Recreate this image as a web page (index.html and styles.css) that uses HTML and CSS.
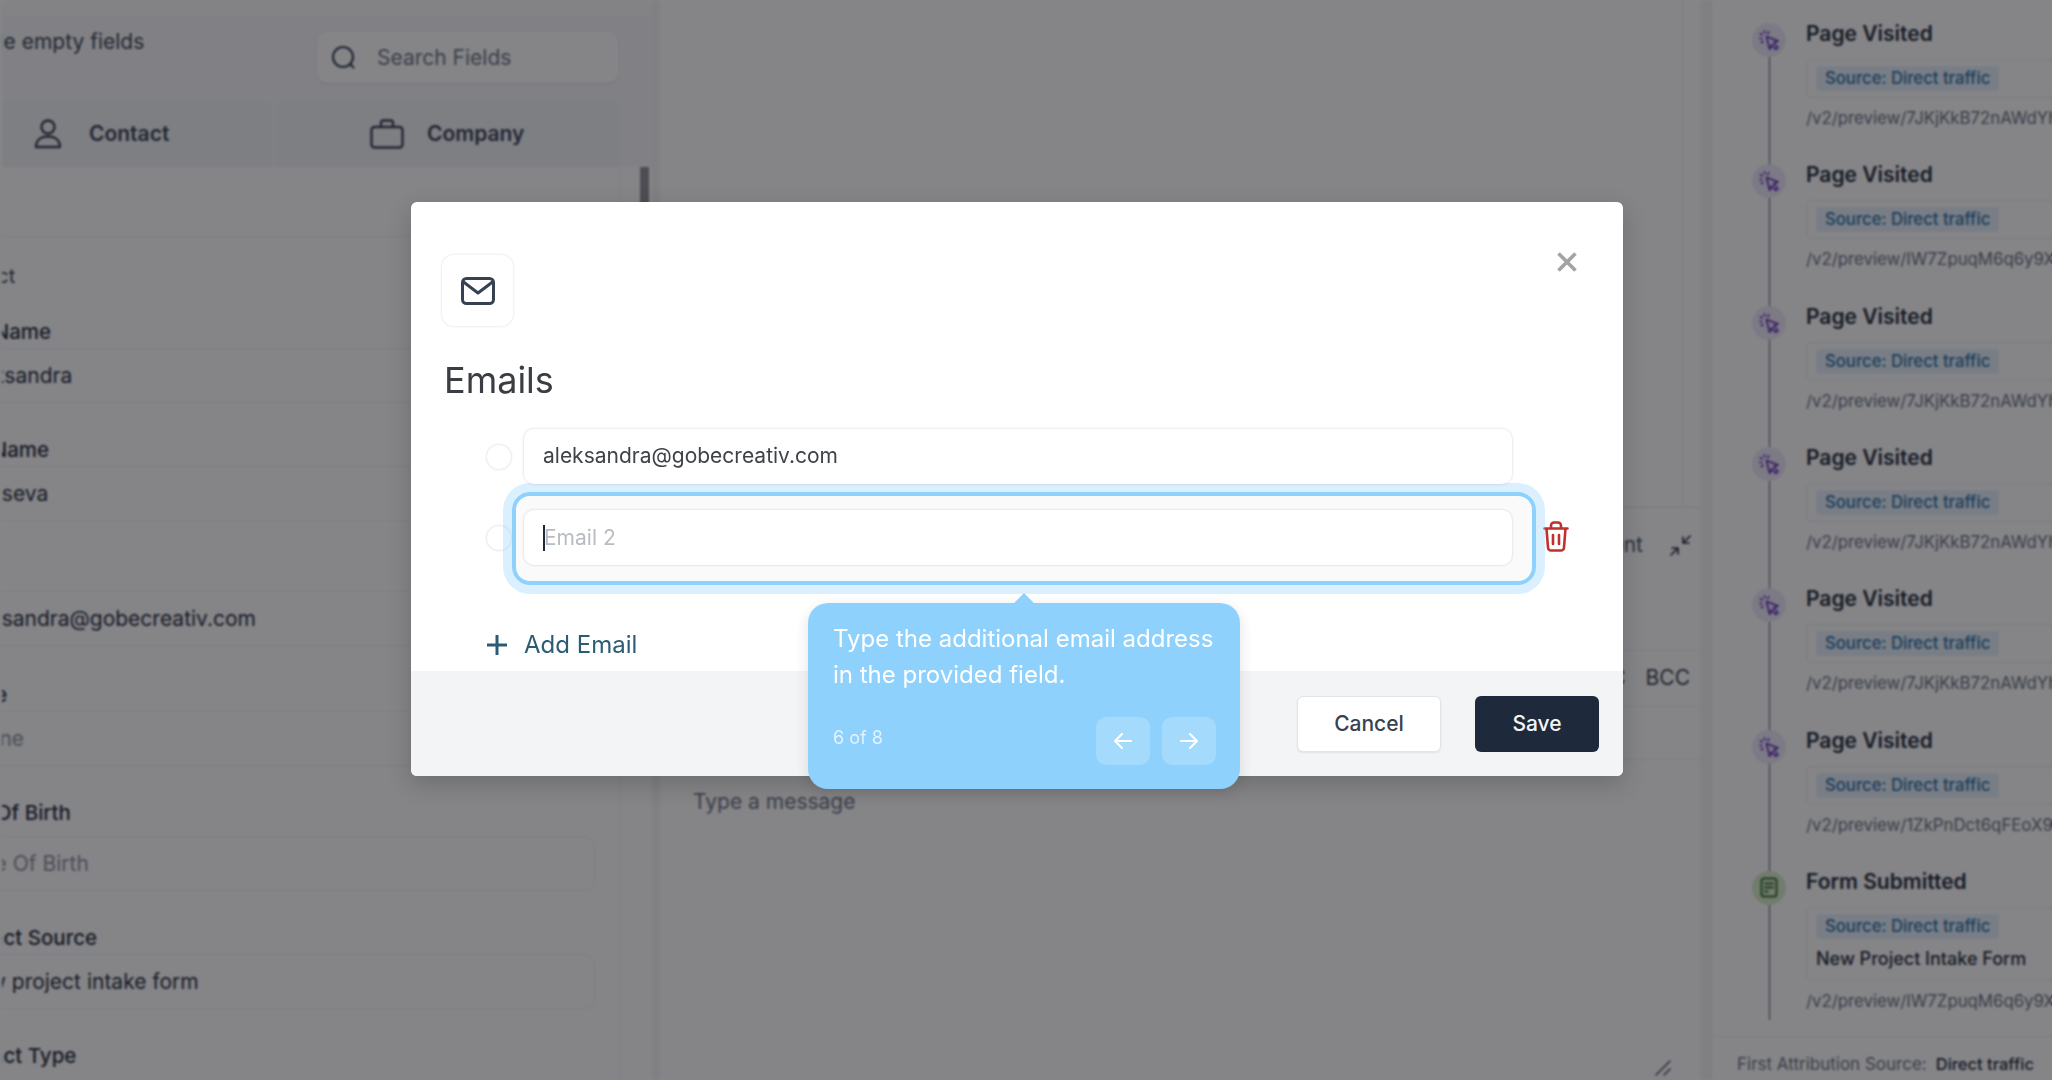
FILE: index.html
```html
<!DOCTYPE html>
<html lang="en">
<head>
    <meta charset="UTF-8">
    <meta name="viewport" content="width=device-width, initial-scale=1.0">
    <title>Emails</title>
    <link rel="stylesheet" href="styles.css">
</head>
<body>
    <div class="app">
        <!-- Contact fields -->
        <aside class="contact-panel">
            <div class="toolbar">
                <span class="toolbar-label">Hide empty fields</span>
                <div class="search-box">
                    <svg width="26" height="26" viewBox="0 0 26 26" fill="none" stroke="#374151" stroke-width="2.2" stroke-linecap="round"><circle cx="12" cy="12" r="10"/><path d="M19.5 19.5l3 3"/></svg>
                    <span>Search Fields</span>
                </div>
            </div>
            <div class="tabs">
                <div class="tab tab-contact">
                    <svg width="28" height="30" viewBox="0 0 28 30" fill="none" stroke="#374151" stroke-width="2.4"><circle cx="14" cy="8" r="6.5"/><path d="M2 28c0-7 5-10.500 12-10.500S26 21 26 28z" stroke-linejoin="round"/></svg>
                    <span>Contact</span>
                </div>
                <div class="tab tab-company">
                    <svg width="34" height="30" viewBox="0 0 34 30" fill="none" stroke="#374151" stroke-width="2.400"><rect x="1.500" y="8" width="31" height="20.500" rx="3"/><path d="M11 8V4a2.500 2.500 0 0 1 2.500-2.500h7A2.500 2.500 0 0 1 23 4v4"/></svg>
                    <span>Company</span>
                </div>
            </div>
            <div class="panel-body">
                <div class="fields-col">
                    <div class="section-gap"></div>
                    <div class="fields">
                        <div class="section-title">Contact</div>
                        <div class="field field-first"><label>First Name</label><div class="field-input">Aleksandra</div></div>
                        <div class="field"><label>Last Name</label><div class="field-input">Kartseva</div></div>
                        <div class="field field-wide"><label>Email</label><div class="field-input">aleksandra@gobecreativ.com</div></div>
                        <div class="field field-mid"><label>Phone</label><div class="field-input placeholder">Phone</div></div>
                        <div class="field field-date"><label>Date Of Birth</label><div class="field-input placeholder">Date Of Birth</div></div>
                        <div class="field field-source"><label>Contact Source</label><div class="field-input">New project intake form</div></div>
                        <div class="field"><label>Contact Type</label></div>
                    </div>
                </div>
                <div class="scroll-thumb"></div>
            </div>
        </aside>

        <!-- Conversation -->
        <main class="conversation">
            <div class="thread"></div>
            <div class="composer">
                <div class="composer-head">
                    <span>Comment</span>
                    <svg width="21" height="21" viewBox="0 0 21 21" fill="none" stroke="#1f2937" stroke-width="1.600" stroke-linecap="round" stroke-linejoin="round"><path d="M20 1l-7 7M13 2v6h6M1 20l7-7M2 13h6v6"/></svg>
                </div>
                <div class="composer-row composer-to"><span>CC</span><span>BCC</span></div>
                <div class="composer-row composer-subject"></div>
                <div class="composer-body">
                    <span class="composer-hint">Type a message</span>
                    <svg class="resize-handle" width="16" height="16" viewBox="0 0 16 16" fill="none" stroke="#374151" stroke-width="1.400" stroke-linecap="round"><path d="M1 15L15 1M9 15l6-6"/></svg>
                </div>
            </div>
        </main>

        <!-- Activity timeline -->
        <aside class="activity">
            <div class="timeline" id="timeline"></div>
            <div class="attribution">
                <span>First Attribution Source:</span>
                <strong>Direct traffic</strong>
            </div>
        </aside>
    </div>

    <!-- Emails dialog -->
    <div class="overlay">
        <div class="modal">
            <div class="modal-body">
                <svg class="close-icon" width="20" height="20" viewBox="0 0 20 20" fill="none" stroke="#a3a3a3" stroke-width="3.600"><path d="M1.500 1.500l17 17M18.500 1.500l-17 17"/></svg>
                <div class="modal-icon">
                    <svg width="34" height="28" viewBox="0 0 34 28" fill="none" stroke="#374151" stroke-width="3" stroke-linejoin="round"><rect x="1.500" y="1.500" width="31" height="25" rx="4"/><path d="M2.500 5L17 16 31.500 5"/></svg>
                </div>
                <h2>Emails</h2>
                <div class="email-row">
                    <span class="radio"></span>
                    <div class="email-input">aleksandra@gobecreativ.com</div>
                </div>
                <div class="email-row email-row-second">
                    <span class="radio"></span>
                    <div class="email-input email-empty"><i class="caret"></i>Email 2</div>
                    <svg class="trash-icon" width="26" height="31" viewBox="0 0 26 31" fill="none" stroke="#c0302c" stroke-width="2.600" stroke-linecap="round" stroke-linejoin="round"><path d="M8 7V4.500A3 3 0 0 1 11 1.500h4a3 3 0 0 1 3 3V7M1.500 7.500h23M3.500 7.500l1.500 19a3 3 0 0 0 3 3h10a3 3 0 0 0 3-3l1.500-19M10 14v9M16 14v9"/></svg>
                </div>
                <div class="add-email">
                    <svg width="20" height="20" viewBox="0 0 20 20" fill="none" stroke="#2c5b75" stroke-width="3"><path d="M10 0v20M0 10h20"/></svg>
                    <span>Add Email</span>
                </div>
                <div class="step-highlight"></div>
            </div>
            <div class="modal-footer">
                <button class="btn btn-cancel">Cancel</button>
                <button class="btn btn-save">Save</button>
            </div>

            <div class="tour-tip">
                <p>Type the additional email address in the provided field.</p>
                <div class="tour-footer">
                    <span class="tour-count">6 of 8</span>
                    <div class="tour-buttons">
                        <button class="tour-btn"><svg width="20" height="18" viewBox="0 0 20 18" fill="none" stroke="#fff" stroke-width="2.200" stroke-linecap="round" stroke-linejoin="round"><path d="M18 9H2M9 2L2 9l7 7"/></svg></button>
                        <button class="tour-btn"><svg width="20" height="18" viewBox="0 0 20 18" fill="none" stroke="#fff" stroke-width="2.200" stroke-linecap="round" stroke-linejoin="round"><path d="M2 9h16M11 2l7 7-7 7"/></svg></button>
                    </div>
                </div>
            </div>
        </div>
    </div>

    <script>
        // Timeline rows
        const visits = [
            '7JKjKkB72nAWdYhQ', 'IW7ZpuqM6q6y9XaB', '7JKjKkB72nAWdYhQ',
            '7JKjKkB72nAWdYhQ', '7JKjKkB72nAWdYhQ', '1ZkPnDct6qFEoX9a'
        ];
        const cursorIcon = '<svg width="20" height="20" viewBox="0 0 20 20" fill="none" stroke="#5b21b6" stroke-width="1.600" stroke-linecap="round" stroke-linejoin="round"><path d="M7.500 6.500L19 11l-4.500 2 4.500 4.500-2.200 2L12.500 15l-1.800 4.500z"/><path d="M5.500 1v2M1.500 3.700L3 5M1 8.500h1.800M2.500 12.500l1.300-1M9.700 2l-1 1.500"/></svg>';
        const formIcon = '<svg width="18" height="21" viewBox="0 0 18 21" fill="none" stroke="#2f6a2e" stroke-width="2" stroke-linecap="round"><rect x="1.500" y="1.500" width="15" height="18" rx="2.500"/><path d="M5 6.500h8M5 10.500h8M5 14.500h2.500"/></svg>';
        const timeline = document.getElementById('timeline');

        function addItem(title, icon, iconClass, extra, path) {
            timeline.insertAdjacentHTML('beforeend', `
                <div class="event">
                    <div class="rail"><span class="event-icon ${iconClass}">${icon}</span><span class="rail-line"></span></div>
                    <div class="event-main">
                        <div class="event-title">${title}</div>
                        <div class="event-box"><span class="source-badge">Source: Direct traffic</span>${extra}</div>
                        <div class="event-path">/v2/preview/${path}</div>
                    </div>
                </div>`);
        }

        visits.forEach(function (id) {
            addItem('Page Visited', cursorIcon, 'icon-visit', '', id);
        });
        addItem('Form Submitted', formIcon, 'icon-form', '<div class="form-name">New Project Intake Form</div>', 'IW7ZpuqM6q6y9XaB');
    </script>
</body>
</html>
```
FILE: styles.css
```css
* {
    box-sizing: border-box;
}

body {
    margin: 0;
    height: 1080px;
    overflow: hidden;
    background: #fff;
    font-family: Inter, "Noto Sans", sans-serif;
    color: #1f2937;
}

.app {
    position: relative;
    display: grid;
    grid-template-columns: 650px 1058px 342px;
    height: 1078px;
    margin: 1px 0 1px 2px;
    border-radius: 12px;
    overflow: hidden;
    background: #fff;
}

/* Left panel */
.contact-panel {
    overflow: hidden;
    background: #fff;
}

.toolbar {
    display: flex;
    justify-content: space-between;
    align-items: flex-start;
    height: 99px;
    padding: 17px 34px 0 0;
    border-top: 14px solid #fafafa;
    background: #f6f7f9;
}

.toolbar-label {
    margin: -2px 0 0 -32px;
    font-size: 21px;
    line-height: 24px;
    color: #374151;
    white-space: nowrap;
}

.search-box {
    display: flex;
    align-items: center;
    gap: 20px;
    width: 301px;
    height: 51px;
    padding-left: 14px;
    border-radius: 10px;
    background: #fff;
    box-shadow: 0 1px 3px rgba(0, 0, 0, 0.1);
    font-size: 21px;
    color: #6b7280;
}

.tabs {
    display: grid;
    grid-template-columns: 270px 345px;
    gap: 3px;
    height: 67px;
    background: #f6f7f9;
}

.tab {
    display: flex;
    align-items: center;
    gap: 27px;
    border-radius: 8px 8px 0 0;
    background: #f1f2f5;
    font-size: 21px;
    font-weight: 600;
    color: #374151;
}

.tab-contact {
    padding-left: 32px;
}

.tab-company {
    padding-left: 95px;
    gap: 23px;
}

.panel-body {
    display: flex;
    height: 911px;
}

.fields-col {
    flex: 0 0 618px;
    overflow: hidden;
    border-right: 1px solid #f1f1f3;
}

.section-gap {
    height: 70px;
    margin-right: -1px;
    border-bottom: 1px solid #eceef1;
    background: #fff;
}

.fields {
    width: 650px;
    margin-left: -57px;
}

.section-title {
    margin: 27px 0 0 -4px;
    font-size: 20px;
    line-height: 24px;
    color: #374151;
}

.field {
    margin-top: 35px;
}

.field-first {
    margin-top: 32px;
}

.field-wide {
    margin-top: 42px;
}

.field-mid {
    margin-top: 37px;
}

.field label {
    display: block;
    height: 24px;
    font-size: 20.500px;
    font-weight: 500;
    line-height: 24px;
    color: #1f2937;
}

.field-input {
    height: 55px;
    margin-top: 4px;
    padding-left: 15px;
    border: 1px solid #eceef1;
    border-radius: 10px;
    background: #fff;
    font-size: 21px;
    line-height: 53px;
    color: #1f2937;
    white-space: nowrap;
}

.field-date .field-input {
    margin-top: 11px;
}

.placeholder {
    color: #8b8f98;
}

.scroll-thumb {
    flex: 0 0 9px;
    height: 45px;
    margin-left: 20px;
    background: #8f9095;
}

/* Middle panel */
.conversation {
    display: flex;
    flex-direction: column;
    background: linear-gradient(90deg, #f4f4f5 8px, #fff 8px, #fff 1048px, #f4f4f5 1048px);
}

.thread {
    flex: 0 0 506px;
    width: 1031px;
    border-right: 1px solid #eceef1;
}

.composer {
    flex: 1;
    display: flex;
    flex-direction: column;
    width: 1048px;
    border-top: 1px solid #e5e7eb;
}

.composer-head {
    display: flex;
    justify-content: flex-end;
    align-items: flex-start;
    gap: 27px;
    height: 142px;
    padding: 25px 9px 0 0;
    font-size: 21px;
    line-height: 24px;
    color: #4b5563;
}

.composer-head svg {
    margin-top: 2px;
}

.composer-row {
    display: flex;
    justify-content: flex-end;
    gap: 20px;
    margin-right: 3px;
    border-top: 1px solid #eceef1;
    font-size: 21px;
    color: #374151;
}

.composer-to {
    height: 56px;
    padding: 14px 7px 0 0;
    line-height: 26px;
}

.composer-subject {
    height: 53px;
}

.composer-body {
    flex: 1;
    display: flex;
    flex-direction: column;
    border-top: 1px solid #eceef1;
    padding: 29px 0 3px 41px;
}

.composer-hint {
    font-size: 21px;
    line-height: 26px;
    color: #6b7280;
}

.resize-handle {
    align-self: flex-end;
    margin: auto 29px 0 0;
}

/* Right panel */
.activity {
    display: flex;
    flex-direction: column;
    overflow: hidden;
    border-left: 2px solid #f0f0f2;
    background: #fff;
}

.timeline {
    flex: 1;
    padding: 20px 0 0 40px;
}

.event {
    display: flex;
    gap: 20px;
    height: 141.330px;
}

.rail {
    display: flex;
    flex-direction: column;
    align-items: center;
    flex: 0 0 34px;
    margin-top: 2px;
}

.event-icon {
    display: flex;
    justify-content: center;
    align-items: center;
    flex: 0 0 34px;
    width: 34px;
    border-radius: 50%;
}

.icon-visit {
    background: #ece8f8;
}

.icon-form {
    background: #d8ecc8;
}

.rail-line {
    flex: 1;
    width: 1px;
    margin-bottom: -2px;
    background: #4b5563;
}

.event:last-child .rail-line {
    flex: 0 0 115px;
    margin-bottom: 0;
}

.event-main {
    flex: 1;
    min-width: 0;
}

.event-title {
    font-size: 21px;
    font-weight: 600;
    line-height: 26px;
    color: #1f2937;
    white-space: nowrap;
}

.event-box {
    width: 300px;
    min-height: 39px;
    margin-top: 12px;
    padding: 6px 9px;
    border: 1px solid #e8e9ec;
    border-radius: 6px;
    background: #fff;
}

.source-badge {
    display: block;
    width: fit-content;
    height: 25px;
    padding: 0 9px;
    border-radius: 3px;
    background: #e6f1fa;
    font-size: 16.700px;
    font-weight: 500;
    line-height: 25px;
    color: #2a6da3;
    white-space: nowrap;
}

.form-name {
    margin: 7px 0 2px;
    font-size: 18px;
    font-weight: 500;
    line-height: 26px;
    color: #1f2937;
    white-space: nowrap;
}

.event-path {
    margin-top: 9px;
    font-size: 16.800px;
    line-height: 22px;
    color: #6b7280;
    white-space: nowrap;
}

.attribution {
    display: flex;
    gap: 9px;
    flex: 0 0 43px;
    padding: 15px 0 0 25px;
    border-top: 1px solid #eceef1;
    font-size: 17px;
    line-height: 24px;
    color: #6b7280;
    white-space: nowrap;
}

.attribution strong {
    font-size: 16.500px;
    font-weight: 500;
    color: #1f2937;
}

/* Dialog */
.overlay {
    position: fixed;
    inset: 0;
    padding: 202px 0 0 411px;
    background: rgba(11, 12, 18, 0.5);
    backdrop-filter: blur(1px);
}

.modal {
    position: relative;
    width: 1212px;
    height: 574px;
    border-radius: 6px;
    background: #fff;
    box-shadow: 0 8px 24px rgba(0, 0, 0, 0.18);
}

.modal-body {
    position: relative;
    height: 469px;
    padding: 53px 0 0 31px;
}

.close-icon {
    position: absolute;
    top: 50px;
    right: 46px;
}

.modal-icon {
    display: flex;
    justify-content: center;
    align-items: center;
    width: 71px;
    height: 71px;
    border-radius: 12px;
    box-shadow: 0 0 3px rgba(0, 0, 0, 0.14);
}

.modal h2 {
    margin: 32px 0 0 2px;
    font-size: 36px;
    font-weight: 400;
    line-height: 44px;
    color: #3a3d42;
}

.email-row {
    display: flex;
    align-items: center;
    gap: 13px;
    margin: 27px 0 0 45px;
}

.email-row-second {
    margin-top: 26px;
}

.radio {
    flex: 0 0 24px;
    height: 24px;
    border-radius: 50%;
    background: #fff;
    box-shadow: 0 0 3px rgba(0, 0, 0, 0.2);
}

.email-input {
    position: relative;
    z-index: 2;
    flex: 0 0 988px;
    height: 55px;
    padding-left: 19px;
    border-radius: 10px;
    background: #fff;
    box-shadow: 0 0 3px rgba(0, 0, 0, 0.18);
    font-size: 21px;
    line-height: 53px;
    color: #3f4349;
}

.email-empty {
    display: flex;
    align-items: center;
    line-height: normal;
    color: #b8bcc2;
}

.caret {
    width: 2px;
    height: 26px;
    margin-right: -1px;
    background: #1f2937;
}

.trash-icon {
    position: relative;
    top: -1px;
    flex: 0 0 26px;
    margin-left: 18px;
}

.add-email {
    display: flex;
    align-items: center;
    gap: 17px;
    margin: 69px 0 0 45px;
    height: 21px;
    font-size: 24px;
    color: #2c5b75;
}

.step-highlight {
    position: absolute;
    z-index: 1;
    top: 290px;
    left: 101px;
    width: 1024px;
    height: 93px;
    border: 4px solid #8ed1fc;
    border-radius: 18px;
    background: rgba(0, 0, 0, 0.02);
    box-shadow: 0 0 0 9px rgba(142, 209, 252, 0.32);
    pointer-events: none;
}

.modal-footer {
    display: flex;
    justify-content: flex-end;
    align-items: center;
    gap: 34px;
    height: 105px;
    padding-right: 24px;
    border-radius: 0 0 6px 6px;
    background: #f3f4f6;
}

.btn {
    height: 56px;
    border-radius: 6px;
    font-family: inherit;
    font-size: 21px;
    font-weight: 500;
}

.btn-cancel {
    width: 144px;
    border: 1px solid #e2e4e8;
    background: #fff;
    box-shadow: 0 1px 2px rgba(0, 0, 0, 0.08);
    color: #374151;
}

.btn-save {
    width: 124px;
    border: 0;
    background: #1e293b;
    color: #f3f4f6;
}

/* Tour tooltip */
.tour-tip {
    position: absolute;
    z-index: 3;
    top: 401px;
    left: 397px;
    width: 432px;
    height: 186px;
    padding: 18px 20px 0 25px;
    border-radius: 20px;
    background: #8ed1fc;
    box-shadow: 0 4px 14px rgba(0, 0, 0, 0.12);
    color: #fff;
}

.tour-tip::before {
    content: "";
    position: absolute;
    top: -7px;
    left: 209px;
    width: 14px;
    height: 14px;
    background: #8ed1fc;
    transform: rotate(45deg);
}

.tour-tip p {
    margin: 0;
    font-size: 24px;
    line-height: 36px;
}

.tour-footer {
    display: flex;
    justify-content: space-between;
    margin-top: 24px;
}

.tour-count {
    margin-top: 10px;
    font-size: 18px;
    line-height: 22px;
    color: rgba(255, 255, 255, 0.75);
}

.tour-buttons {
    display: flex;
    gap: 12px;
    margin-right: 4px;
}

.tour-btn {
    display: flex;
    justify-content: center;
    align-items: center;
    width: 54px;
    height: 48px;
    padding: 0;
    border: 0;
    border-radius: 10px;
    background: rgba(255, 255, 255, 0.2);
}
```
